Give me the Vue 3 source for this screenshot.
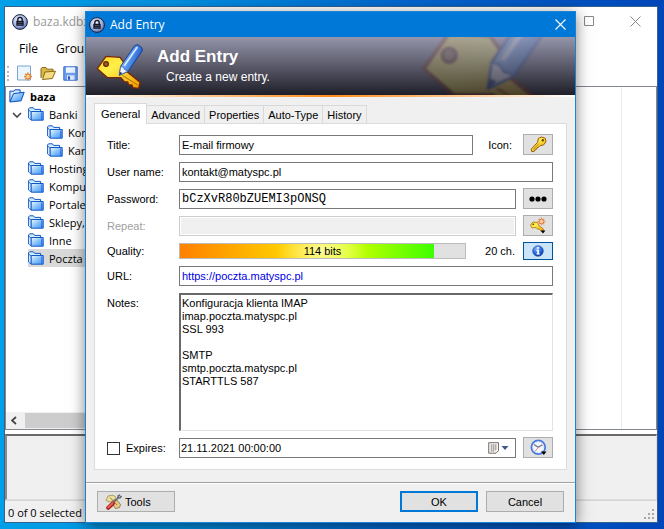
<template>
  <div class="desktop">
    <svg class="defs" aria-hidden="true">
      <defs>
        <linearGradient id="gFolder" x1="0" y1="0" x2="1" y2="1">
          <stop offset="0" stop-color="#f4faff" />
          <stop offset="0.5" stop-color="#86c2fa" />
          <stop offset="1" stop-color="#3f92f4" />
        </linearGradient>
        <linearGradient id="gGold" x1="0" y1="0" x2="1" y2="1">
          <stop offset="0" stop-color="#ffd21c" />
          <stop offset="0.35" stop-color="#fff04a" />
          <stop offset="1" stop-color="#ee9b00" />
        </linearGradient>
        <linearGradient id="gPencil" x1="0" y1="0" x2="1" y2="0.5">
          <stop offset="0" stop-color="#cfe4ff" />
          <stop offset="0.5" stop-color="#5f9df2" />
          <stop offset="1" stop-color="#174fc0" />
        </linearGradient>
        <radialGradient id="gLock" cx="0.4" cy="0.35" r="0.7">
          <stop offset="0" stop-color="#f1f4ff" />
          <stop offset="0.6" stop-color="#a3b2e4" />
          <stop offset="1" stop-color="#4d5f9e" />
        </radialGradient>
        <radialGradient id="gInfo" cx="0.4" cy="0.3" r="0.7">
          <stop offset="0" stop-color="#8ab8ff" />
          <stop offset="0.6" stop-color="#2b6be0" />
          <stop offset="1" stop-color="#0a3aa8" />
        </radialGradient>
        <symbol id="lock" viewBox="0 0 16 16">
          <circle cx="8" cy="8" r="7.4" fill="url(#gLock)" stroke="#1c2238" />
          <path d="M5.8 7V5.6a2.2 2.2 0 0 1 4.4 0V7" fill="none" stroke="#14151f" stroke-width="1.4" />
          <path d="M4.3 6.8h7.4v5H4.3z" fill="#14151f" />
          <path d="M5.5 8.5h5M5.5 10.3h5" stroke="#5f6991" stroke-width="0.7" />
        </symbol>
        <symbol id="folder" viewBox="0 0 16 14">
          <path d="M.6 10.8V1.9L1.6.8h3.8l1.2 1.6h6v2" fill="#d5ecff" stroke="#1158c5" />
          <path d="M.6 11 3.200 13V5.200L.6 3z" fill="#e6f4ff" stroke="#1158c5" stroke-width="0.8" />
          <path d="M3.200 4.500h12v8.700h-12z" fill="url(#gFolder)" stroke="#1158c5" />
          <path d="M13.700 5.500v7" stroke="#1d59e8" stroke-width="0.8" />
        </symbol>
        <symbol id="folderOpen" viewBox="0 0 16 14">
          <path d="M.9 12.500V2.200h4l1-1.400h5.200v3.400" fill="#cfe9ff" stroke="#0a4dba" />
          <path d="M.9 13 4.500 4.700l10.700-1.500-3.100 8.600z" fill="url(#gFolder)" stroke="#0a4dba" />
        </symbol>
        <symbol id="keyPencil" viewBox="0 0 150 150">
          <path d="M7 80 33 43 75 46l16 22 6 22 38 31-4 18-17-2-3-8-10 0-3-9-10-1-10-12H38z" fill="url(#gGold)" stroke="#7a2606" stroke-width="4" stroke-linejoin="round" />
          <path d="M82 100 128 129" stroke="#b56a00" stroke-width="3" />
          <circle cx="33" cy="66" r="7" fill="#8a6a30" stroke="#6b2407" stroke-width="4" />
          <path d="M73 100 77 73 119 11 129 8 141 18 142 26 100 87z" fill="url(#gPencil)" stroke="#173d94" stroke-width="3" stroke-linejoin="round" />
          <path d="M73 100 77 73 85 76 89 83 100 87z" fill="#f3f3fb" stroke="#2450a8" stroke-width="2" />
          <path d="M73 100 75 90 82 93z" fill="#142c75" />
          <path d="M88 71 127 15" stroke="#dcecff" stroke-width="5" />
        </symbol>
      </defs>
    </svg>

    <main class="window">
      <header class="win-title">
        <svg class="i16"><use href="#lock" /></svg>
        <span class="win-name">baza.kdbx</span>
        <button class="win-btn" aria-label="Maximize">
          <svg width="11" height="11" viewBox="0 0 11 11"><path d="M.5.5h9v9h-9z" fill="none" stroke="#888" /></svg>
        </button>
        <button class="win-btn" aria-label="Close">
          <svg width="11" height="11" viewBox="0 0 11 11"><path d="m.5.5 10 10m0-10-10 10" stroke="#888" /></svg>
        </button>
      </header>
      <nav class="menu">
        <button>File</button>
        <button>Group</button>
      </nav>
      <div class="toolbar">
        <span class="grip"></span>
        <button aria-label="New">
          <svg width="16" height="17" viewBox="0 0 16 17">
            <path d="M.5 1h13v14H.5z" fill="#eaf6ff" stroke="#7ba6cf" />
            <path d="M11 7.500v8M7 11.500h8M8.200 8.700l5.600 5.600m0-5.600-5.600 5.600" stroke="#e0823a" stroke-width="1.600" />
            <circle cx="11" cy="11.500" r="1.700" fill="#ffd98c" />
          </svg>
        </button>
        <button aria-label="Open">
          <svg width="16" height="15" viewBox="0 0 16 15">
            <path d="M1 12V2.500L2 1.500h4l1 1.700h6v2.500" fill="#d9b64a" stroke="#8a6a14" />
            <path d="M2.500 13.500 5 6l10.500-.8-3.200 7.300z" fill="#f3da83" stroke="#8a6a14" />
          </svg>
        </button>
        <button aria-label="Save">
          <svg width="15" height="15" viewBox="0 0 15 15">
            <path d="M.8.8h13.400v13.400H.8z" fill="#6c9ff0" stroke="#3a6cd0" />
            <path d="M3 1.300h9v5.500H3z" fill="#eef5ff" />
            <path d="M4 9.300h7.500v4.500H4z" fill="#dfe9f8" />
            <path d="M5 10.300h2v3.500H5z" fill="#2a5cc4" />
          </svg>
        </button>
      </div>
      <section class="panes">
        <div class="tree">
          <ul>
            <li v-for="g in groups" :key="g.name" :class="['lvl' + g.level, { selected: g.selected }]">
              <svg v-if="g.open" class="chev" viewBox="0 0 10 6"><path d="m1 1 4 4 4-4" fill="none" stroke="#444" stroke-width="1.6" /></svg>
              <span class="node">
                <svg class="folder"><use :href="g.level ? '#folder' : '#folderOpen'" /></svg>
                <span>{{ g.name }}</span>
              </span>
            </li>
          </ul>
          <div class="hscroll">
            <svg width="6" height="9" viewBox="0 0 6 9"><path d="m5 1-4 3.500 4 3.500" fill="none" stroke="#444" stroke-width="1.8" /></svg>
            <span class="thumb"></span>
          </div>
        </div>
        <div class="list"><span class="col-line"></span></div>
      </section>
      <section class="details"></section>
      <footer class="status">
        <span>0 of 0 selected</span>
        <svg width="11" height="11" viewBox="0 0 11 11" fill="#a8a8a8">
          <path d="M8 0h2v2H8zM4 4h2v2H4zM8 4h2v2H8zM0 8h2v2H0zM4 8h2v2H4zM8 8h2v2H8z" />
        </svg>
      </footer>
    </main>

    <form class="dialog" role="dialog" aria-label="Add Entry" @submit.prevent>
      <header class="dlg-title">
        <svg class="i16"><use href="#lock" /></svg>
        <span>Add Entry</span>
        <button type="button" aria-label="Close">
          <svg width="11" height="11" viewBox="0 0 11 11"><path d="m.5.5 10 10m0-10-10 10" stroke="#fff" stroke-width="1.1" /></svg>
        </button>
      </header>
      <div class="banner">
        <svg class="banner-ghost"><use href="#keyPencil" /></svg>
        <svg class="banner-icon"><use href="#keyPencil" /></svg>
        <div class="banner-text">
          <h1>Add Entry</h1>
          <p>Create a new entry.</p>
        </div>
      </div>
      <div class="banner-line"></div>

      <div class="content">
        <div class="tabs" role="tablist">
          <button v-for="t in tabs" :key="t" type="button" role="tab" :class="{ active: t === tab }" :aria-selected="t === tab" @click="tab = t">{{ t }}</button>
        </div>
        <div class="panel">
          <div class="row">
            <label for="title">Title:</label>
            <input id="title" v-model="entry.title" type="text" />
            <span class="icon-label">Icon:</span>
            <button type="button" class="tool" aria-label="Pick icon">
              <svg width="17" height="17" viewBox="0 0 17 17">
                <path d="M8.300 2.500 11.500 1l3.800 1.300.6 3.500-2.500 3.300-3.400.4-1.300 1.700-1.500.2-.4 1.700-1.700.2-.5 1.800-2.800.6-.6-2.500 6.500-7z" fill="url(#gGold)" stroke="#9a5a08" />
                <circle cx="12.800" cy="4.300" r="1.200" fill="#6b4210" />
                <path d="m3 13.500 6-6" stroke="#b97900" />
              </svg>
            </button>
          </div>
          <div class="row">
            <label for="user">User name:</label>
            <input id="user" v-model="entry.user" type="text" />
          </div>
          <div class="row">
            <label for="pass">Password:</label>
            <input id="pass" v-model="entry.password" class="mono" type="text" spellcheck="false" />
            <button type="button" class="tool" aria-label="Show password">
              <svg width="18" height="6" viewBox="0 0 18 6"><circle cx="3" cy="3" r="2.600" /><circle cx="9" cy="3" r="2.600" /><circle cx="15" cy="3" r="2.600" /></svg>
            </button>
          </div>
          <div class="row">
            <label for="repeat" class="off">Repeat:</label>
            <input id="repeat" type="text" disabled />
            <button type="button" class="tool" aria-label="Generate password">
              <svg width="18" height="17" viewBox="0 0 18 17">
                <path d="m1.500 8 2.500-3 4.500.5 1.500 3.300 4.500 3.200-.5 2-2.300-.2-1.400-1.500-2-.3-1.300-1.500-4 .5z" fill="url(#gGold)" stroke="#b07a20" stroke-width="0.9" />
                <circle cx="4.300" cy="7.300" r="0.900" fill="#6b4210" />
                <path d="M12.500.5v8M8.500 4.500h8M9.700 1.700l5.600 5.600m0-5.600L9.700 7.300" stroke="#e59a70" stroke-width="1.300" />
                <circle cx="12.500" cy="4.500" r="2.300" fill="#ffc9a0" stroke="#df7f4a" />
                <path d="M11.500 13.500h5L14 16.500z" fill="#000" />
              </svg>
            </button>
          </div>
          <div class="row quality">
            <span class="label">Quality:</span>
            <div class="meter" role="img" aria-label="Quality">
              <div class="fill" :style="{ width: quality + '%' }"></div>
              <span>114 bits</span>
            </div>
            <span class="chars">20 ch.</span>
            <button type="button" class="tool info" aria-label="Quality info">
              <svg width="12" height="12" viewBox="0 0 13 13">
                <circle cx="6.500" cy="6.500" r="5.800" fill="url(#gInfo)" stroke="#1746a8" stroke-width="0.600" />
                <path d="M5.500 2.300h2v1.800h-2zM4.800 5.200h2.800v4h.9v1.200H4.800V9.200h.9V6.400h-.9z" fill="#fff" />
              </svg>
            </button>
          </div>
          <div class="row url">
            <label for="url">URL:</label>
            <input id="url" v-model="entry.url" type="text" class="link" />
          </div>
          <div class="row notes">
            <label for="notes">Notes:</label>
            <textarea id="notes" ref="notesBox" v-model="entry.notes" spellcheck="false"></textarea>
          </div>
          <div class="row">
            <label class="expires"><input v-model="entry.expires" type="checkbox" />Expires:</label>
            <div class="date">
              <input v-model="entry.date" type="text" aria-label="Expiry date" />
              <button type="button" aria-label="Open calendar">
                <svg width="21" height="12" viewBox="0 0 21 12">
                  <path d="M.7.7h9.800v8l-2.500 2.500H.7z" fill="#f7f5f2" stroke="#776d6a" />
                  <path d="M2.500 3h6.500M2.500 5h6.500M2.500 7h6.500M2.500 9h4M3.500 2.500v7M5.500 2.500v7M7.500 2.500v6" stroke="#999" stroke-width="0.700" />
                  <path d="M13.500 4h7L17 8z" fill="#3c5a85" />
                </svg>
              </button>
            </div>
            <button type="button" class="tool" aria-label="Expiry presets">
              <svg width="17" height="17" viewBox="0 0 17 17">
                <circle cx="8.300" cy="8.300" r="6.900" fill="#f4f7ff" stroke="#4a7bdc" stroke-width="1.800" />
                <circle cx="8.300" cy="8.300" r="5.300" fill="none" stroke="#a9c1ef" stroke-width="0.800" stroke-dasharray="1 1.770" />
                <path d="m4 5.500 4.300 2.800 4.200-2.600" fill="none" stroke="#6a7080" stroke-width="1.200" />
                <path d="m8.300 8.300-3.300 4" stroke="#e88a84" />
                <path d="M11 12.500h5.500l-2.700 3.500z" fill="#000" />
              </svg>
            </button>
          </div>
        </div>
      </div>

      <footer class="dlg-footer">
        <button type="button" class="btn tools">
          <svg width="17" height="16" viewBox="0 0 17 16">
            <path d="M1 6.500 3 2l5-.8 3 2-1.500 3L5 8z" fill="#efdf9e" stroke="#a08a50" stroke-width="0.800" />
            <path d="m8.500 6 3-.5 4 5-1 3-4 1-3-4z" fill="#e6c88a" stroke="#8a6828" stroke-width="0.800" />
            <path d="m8 9 5-5 .2-2L15 .8M13 4l2-.2L16.500 2" fill="none" stroke="#5f6470" stroke-width="1.600" />
            <path d="M5 3.500 12 11" stroke="#8f7b50" />
            <path d="m7.800 9.500-4.600 4.300" stroke="#a52222" stroke-width="4" stroke-linecap="round" />
            <path d="m7.500 9.300-4.300 4" stroke="#ee5b50" stroke-width="2" stroke-linecap="round" />
          </svg>
          Tools
        </button>
        <button type="submit" class="btn ok">OK</button>
        <button type="button" class="btn">Cancel</button>
      </footer>
    </form>
  </div>
</template>

<script setup>
import { onMounted, reactive, ref } from 'vue'

const groups = [
  { name: 'baza', level: 0 },
  { name: 'Banki', level: 1, open: true },
  { name: 'Konta', level: 2 },
  { name: 'Karty', level: 2 },
  { name: 'Hosting', level: 1 },
  { name: 'Komputery', level: 1 },
  { name: 'Portale', level: 1 },
  { name: 'Sklepy,', level: 1 },
  { name: 'Inne', level: 1 },
  { name: 'Poczta', level: 1, selected: true },
]

const tabs = ['General', 'Advanced', 'Properties', 'Auto-Type', 'History']
const tab = ref('General')
const quality = 89
const notesBox = ref(null)

const entry = reactive({
  title: 'E-mail firmowy',
  user: 'kontakt@matyspc.pl',
  password: 'bCzXvR80bZUEMI3pONSQ',
  url: 'https://poczta.matyspc.pl',
  notes: 'Konfiguracja klienta IMAP\nimap.poczta.matyspc.pl\nSSL 993\n\nSMTP\nsmtp.poczta.matyspc.pl\nSTARTTLS 587',
  expires: false,
  date: '21.11.2021 00:00:00',
})

onMounted(() => {
  const box = notesBox.value
  box.focus()
  box.setSelectionRange(box.value.length, box.value.length)
})
</script>

<style>
body {
  margin: 0;
}
</style>

<style scoped>
* { box-sizing: border-box; }
.desktop {
  position: relative;
  min-height: 100vh;
  display: flex;
  padding: 6px 6px 6px 4px;
  background: linear-gradient(90deg, #00a0e8 0%, #0090e0 25%, #0066cc 60%, #0046b8 100%);
  font-family: "Liberation Sans", Arial, sans-serif;
  font-size: 11px;
  color: #000;
  overflow: hidden;
}
.defs { position: absolute; width: 0; height: 0; }
button, input, textarea { font: inherit; color: inherit; margin: 0; }
button { padding: 0; border: none; background: none; }
svg { flex: none; display: block; }
.i16 { width: 16px; height: 16px; }

/* main window */
.window {
  flex: 1;
  display: flex;
  flex-direction: column;
  min-width: 0;
  background: #fff;
  border: 1px solid #35618f;
  font-family: "Open Sans", "Noto Sans", sans-serif;
}
.win-title {
  display: flex;
  align-items: center;
  height: 29px;
  padding: 0 16px 0 7px;
  color: #999;
  font-size: 12px;
}
.win-name { flex: 1; margin-left: 5px; }
.win-btn { margin-left: 35px; }
.menu {
  display: flex;
  gap: 18px;
  height: 25px;
  padding: 0 14px;
  font-size: 12px;
}
.toolbar {
  display: flex;
  align-items: center;
  gap: 7px;
  height: 25px;
  padding-left: 2px;
}
.grip { width: 3px; height: 15px; border-left: 2px dotted #bbb; }
.panes { flex: 1; display: flex; min-height: 0; }
.tree {
  flex: 1;
  display: flex;
  flex-direction: column;
  border: 1px solid #828790;
}
.tree ul { flex: 1; list-style: none; margin: 0; padding: 0; }
.tree li { position: relative; display: flex; height: 18px; }
.node { flex: 1; display: flex; align-items: center; gap: 5px; white-space: nowrap; }
.folder { width: 16px; height: 14px; }
.lvl0 { padding-left: 3px; font-weight: bold; }
.lvl1 { padding-left: 22px; }
.lvl2 { padding-left: 41px; }
.selected .node { background: #d9d9d9; }
.chev { position: absolute; left: 6px; top: 7px; width: 10px; height: 6px; }
.hscroll { display: flex; align-items: center; gap: 8px; height: 17px; padding-left: 5px; background: #f0f0f0; }
.thumb { flex: 1; height: 15px; background: #cdcdcd; }
.list {
  flex: 1;
  display: flex;
  justify-content: flex-end;
  padding-right: 34px;
  border: 1px solid #828790;
}
.col-line { width: 1px; background: #e3ecf5; }
.details {
  height: 66px;
  margin-top: 4px;
  background: #f0f0f0;
  border: 1px solid #dcdcdc;
  border-top: 2px solid #696969;
  border-left: 2px solid #8a8a8a;
}
.status {
  display: flex;
  align-items: flex-end;
  justify-content: space-between;
  height: 22px;
  padding: 0 2px 2px 3px;
  border-top: 1px solid #d7d7d7;
  background: #f0f0f0;
}

/* entry dialog, floating over the main window */
.dialog {
  position: absolute;
  left: 85px;
  right: 88px;
  top: 11px;
  background: #f0f0f0;
  border: 1px solid #1883d7;
  box-shadow: 0 3px 14px rgba(0, 0, 0, 0.5);
}
.dlg-title {
  display: flex;
  align-items: center;
  gap: 5px;
  height: 25px;
  padding: 0 9px 0 3px;
  background: #0078d7;
  color: #fff;
  font-family: "Open Sans", "Noto Sans", sans-serif;
  font-size: 12px;
}
.dlg-title span { flex: 1; }
.banner {
  position: relative;
  display: flex;
  height: 58px;
  padding: 5px 9px;
  overflow: hidden;
  background: linear-gradient(#9595ab, #1f1f29);
  color: #fff;
}
.banner-icon { width: 50px; height: 50px; }
.banner-ghost {
  position: absolute;
  right: 12px;
  top: -46px;
  width: 146px;
  height: 146px;
  opacity: 0.2;
  filter: blur(1px);
}
.banner-text { padding: 5px 0 0 12px; }
.banner h1 { margin: 0; font-size: 17px; line-height: 20px; }
.banner p { margin: 3px 0 0 9px; font-size: 12px; line-height: 15px; }
.banner-line { height: 2px; background: linear-gradient(90deg, #fff, #ff8c1a 50%, #fff); }
.content { padding: 6px 8px 12px; }
.tabs { display: flex; align-items: flex-end; height: 21px; position: relative; }
.tabs button {
  height: 18px;
  margin-bottom: 1px;
  padding: 0 4px;
  border: 1px solid #d9d9d9;
  border-left: none;
  border-bottom: none;
}
.tabs .active {
  height: 21px;
  margin-bottom: 0;
  padding: 0 6px;
  border-left: 1px solid #d9d9d9;
  background: #fff;
}
.panel {
  display: flex;
  flex-direction: column;
  gap: 6px;
  margin-top: -1px;
  padding: 10px 13px 11px 12px;
  border: 1px solid #dcdcdc;
  background: #fff;
}
.row { display: flex; align-items: flex-end; height: 21px; }
.row > label, .row > .label { width: 72px; line-height: 20px; }
.row .off { color: #a0a0a0; }
.row > input {
  flex: 1;
  min-width: 0;
  height: 20px;
  padding: 0 2px;
  border: 1px solid #7a7a7a;
  border-radius: 0;
  background: #fff;
}
.row > input:disabled { border-color: #ccc; background: #f0f0f0; box-shadow: inset 0 0 0 1px #fff; }
.row > .mono { font-family: "Liberation Mono", "Courier New", monospace; font-size: 12px; }
.row > .link { color: #0000e6; }
.icon-label { margin: 0 11px 0 15px; line-height: 20px; }
.tool {
  display: flex;
  align-items: center;
  justify-content: center;
  width: 30px;
  height: 21px;
  border: 1px solid #adadad;
  background: #e1e1e1;
}
.row > input + .tool, .date + .tool { margin-left: 7px; }
.row.quality { height: 18px; align-items: center; }
.meter {
  position: relative;
  flex: 1;
  height: 16px;
  border: 1px solid #bcbcbc;
  background: #e1e1e1;
  text-align: center;
  line-height: 15px;
}
.meter .fill {
  height: 14px;
  background:
    radial-gradient(ellipse 46px 26px at 56% 50%, rgba(255, 255, 200, 0.8), rgba(255, 255, 200, 0)),
    linear-gradient(90deg, #ff8000, #ffe000 50%, #d8ff00 65%, #3cff00);
}
.meter span { position: absolute; inset: 0; }
.chars { margin: 0 8px 0 19px; }
.tool.info { height: 18px; border-color: #005499; background: #cce4f7; }
.row.url { align-items: flex-start; }
.row.notes { height: auto; align-items: flex-start; }
textarea {
  flex: 1;
  min-width: 0;
  height: 138px;
  padding: 2px 1px;
  line-height: 13px;
  border: 1px solid #e3e3e3;
  border-top: 2px solid #696969;
  border-left: 2px solid #696969;
  background: #fff;
  resize: none;
  outline: none;
}
.expires { display: flex; align-items: center; gap: 6px; }
.expires input {
  appearance: none;
  width: 13px;
  height: 13px;
  border: 1px solid #333;
  background: #fff;
}
.expires input:checked { background: #0078d7; }
.date {
  flex: 1;
  display: flex;
  align-items: center;
  height: 20px;
  padding: 0 6px 0 1px;
  border: 1px solid #7a7a7a;
}
.date input { flex: 1; min-width: 0; padding: 0; border: none; outline: none; background: none; }
.dlg-footer {
  display: flex;
  gap: 8px;
  padding: 8px 11px 10px;
  border-top: 1px solid #a0a0a0;
  box-shadow: inset 0 1px #fff;
}
.btn {
  display: flex;
  align-items: center;
  justify-content: center;
  gap: 3px;
  width: 78px;
  height: 21px;
  border: 1px solid #adadad;
  background: #e1e1e1;
}
.tools { justify-content: flex-start; padding-left: 7px; margin-right: auto; }
.ok { border: 2px solid #0078d7; }
</style>
